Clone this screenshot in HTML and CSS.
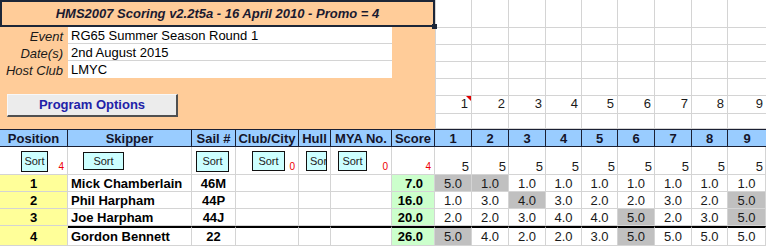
FILE: index.html
```html
<!DOCTYPE html>
<html>
<head>
<meta charset="utf-8">
<link rel="stylesheet" href="styles.css">
</head>
<body>
<div class="top">
  <div class="panel">
    <div class="title">HMS2007 Scoring v2.2t5a - 16 April 2010 - Promo = 4<span class="handle"></span></div>
    <div class="info">
      <div class="lbl">Event</div><div class="val">RG65 Summer Season Round 1</div>
      <div class="lbl">Date(s)</div><div class="val">2nd August 2015</div>
      <div class="lbl">Host Club</div><div class="val last">LMYC</div>
    </div>
    <div class="btnrow"><div class="progbtn">Program Options</div></div>
  </div>
  <div class="blank">
    <div class="g h0"></div><div class="g h0"></div><div class="g h0"></div><div class="g h0"></div><div class="g h0"></div><div class="g h0"></div><div class="g h0"></div><div class="g h0"></div><div class="g h0"></div>
    <div class="g"></div><div class="g"></div><div class="g"></div><div class="g"></div><div class="g"></div><div class="g"></div><div class="g"></div><div class="g"></div><div class="g"></div>
    <div class="g"></div><div class="g"></div><div class="g"></div><div class="g"></div><div class="g"></div><div class="g"></div><div class="g"></div><div class="g"></div><div class="g"></div>
    <div class="g"></div><div class="g"></div><div class="g"></div><div class="g"></div><div class="g"></div><div class="g"></div><div class="g"></div><div class="g"></div><div class="g"></div>
    <div class="g"></div><div class="g"></div><div class="g"></div><div class="g"></div><div class="g"></div><div class="g"></div><div class="g"></div><div class="g"></div><div class="g"></div>
    <div class="g num comment">1<span class="tri"></span></div><div class="g num">2</div><div class="g num">3</div><div class="g num">4</div><div class="g num">5</div><div class="g num">6</div><div class="g num">7</div><div class="g num">8</div><div class="g num">9</div>
    <div class="g"></div><div class="g"></div><div class="g"></div><div class="g"></div><div class="g"></div><div class="g"></div><div class="g"></div><div class="g"></div><div class="g"></div>
  </div>
</div>

<div class="table">
  <div class="hd">Position</div><div class="hd">Skipper</div><div class="hd">Sail #</div><div class="hd">Club/City</div><div class="hd">Hull</div><div class="hd">MYA No.</div><div class="hd">Score</div>
  <div class="hd">1</div><div class="hd">2</div><div class="hd">3</div><div class="hd">4</div><div class="hd">5</div><div class="hd">6</div><div class="hd">7</div><div class="hd">8</div><div class="hd">9</div>

  <div class="sc"><div class="sbtn b-pos">Sort</div><span class="rn">4</span></div>
  <div class="sc"><div class="sbtn b-skp">Sort</div></div>
  <div class="sc"><div class="sbtn b-sail">Sort</div></div>
  <div class="sc"><div class="sbtn b-club">Sort</div><span class="rn">0</span></div>
  <div class="sc"><div class="sbtn b-hull">Sor</div></div>
  <div class="sc"><div class="sbtn b-mya">Sort</div><span class="rn">0</span></div>
  <div class="sc"><span class="rn">4</span></div>
  <div class="sc cnt">5</div><div class="sc cnt">5</div><div class="sc cnt">5</div><div class="sc cnt">5</div><div class="sc cnt">5</div><div class="sc cnt">5</div><div class="sc cnt">5</div><div class="sc cnt">5</div><div class="sc cnt">5</div>

  <div class="c pos">1</div><div class="c skp">Mick Chamberlain</div><div class="c sail">46M</div><div class="c"></div><div class="c"></div><div class="c"></div><div class="c score">7.0</div>
  <div class="c r d">5.0</div><div class="c r d">1.0</div><div class="c r">1.0</div><div class="c r">1.0</div><div class="c r">1.0</div><div class="c r">1.0</div><div class="c r">1.0</div><div class="c r">1.0</div><div class="c r">1.0</div>

  <div class="c pos">2</div><div class="c skp">Phil Harpham</div><div class="c sail">44P</div><div class="c"></div><div class="c"></div><div class="c"></div><div class="c score">16.0</div>
  <div class="c r">1.0</div><div class="c r">3.0</div><div class="c r d">4.0</div><div class="c r">3.0</div><div class="c r">2.0</div><div class="c r">2.0</div><div class="c r">3.0</div><div class="c r">2.0</div><div class="c r d">5.0</div>

  <div class="c pos">3</div><div class="c skp">Joe Harpham</div><div class="c sail">44J</div><div class="c"></div><div class="c"></div><div class="c"></div><div class="c score">20.0</div>
  <div class="c r">2.0</div><div class="c r">2.0</div><div class="c r">3.0</div><div class="c r">4.0</div><div class="c r">4.0</div><div class="c r d">5.0</div><div class="c r">2.0</div><div class="c r">3.0</div><div class="c r d">5.0</div>

  <div class="c pos t0">4</div><div class="c skp t">Gordon Bennett</div><div class="c sail t">22</div><div class="c t"></div><div class="c t"></div><div class="c t"></div><div class="c score t">26.0</div>
  <div class="c r d t">5.0</div><div class="c r t">4.0</div><div class="c r t">2.0</div><div class="c r t">2.0</div><div class="c r t">3.0</div><div class="c r d t">5.0</div><div class="c r t">5.0</div><div class="c r t">5.0</div><div class="c r t">5.0</div>
</div>
</body>
</html>
```

FILE: styles.css
```css
* {
  box-sizing: border-box;
  margin: 0;
  padding: 0;
}

body {
  margin: 0;
  width: 766px;
  height: 246px;
  overflow: hidden;
  background: #fff;
  font-family: "Liberation Sans", Arial, sans-serif;
  font-size: 13px;
  color: #000;
}

/* ---------- top area ---------- */
.top {
  display: flex;
  height: 129px;
}

.panel {
  width: 435px;
  background: #ffcc99;
  display: flex;
  flex-direction: column;
}

.title {
  position: relative;
  height: 27px;
  border: 2px solid #1c2638;
  display: flex;
  align-items: center;
  justify-content: center;
  font-weight: bold;
  font-style: italic;
  color: #1a1a30;
}

.handle {
  position: absolute;
  right: -4px;
  bottom: -4px;
  width: 5px;
  height: 5px;
  background: #1c2638;
}

.info {
  display: grid;
  grid-template-columns: 68px 324px;
  grid-auto-rows: 17px;
}

.lbl {
  font-style: italic;
  text-align: right;
  padding: 2px 5px 0 0;
  line-height: 15px;
  color: #1a1a1a;
}

.val {
  background: #fff;
  border-bottom: 1px solid #d4d4d4;
  padding: 2px 0 0 3px;
  line-height: 14px;
}

.val.last {
  border-bottom: none;
}

.btnrow {
  padding: 16px 0 0 7px;
}

.progbtn {
  width: 171px;
  height: 23px;
  background: #ececec;
  border-top: 1px solid #f8f8f8;
  border-left: 1px solid #f8f8f8;
  border-right: 2px solid #505050;
  border-bottom: 2px solid #505050;
  display: flex;
  align-items: center;
  justify-content: center;
  font-weight: bold;
  color: #2222a8;
  padding-bottom: 1px;
}

.blank {
  width: 331px;
  border-left: 1px solid #d4d4d4;
  display: grid;
  grid-template-columns: 36px 37px 37px 36px 36px 37px 37px 36px 38px;
  grid-template-rows: 28px 17px 17px 17px 17px 18px 15px;
}

.g {
  border-right: 1px solid #d4d4d4;
  border-bottom: 1px solid #d4d4d4;
}

.g:nth-child(9n) {
  border-right: none;
}

.g.h0 {
  border-bottom: 1px solid #d4d4d4;
}

.num {
  position: relative;
  display: flex;
  align-items: flex-end;
  justify-content: flex-end;
  padding: 0 3px 2px 0;
  line-height: 14px;
  color: #1a1a1a;
}

.tri {
  position: absolute;
  top: 0;
  right: 0;
  width: 0;
  height: 0;
  border-top: 5px solid #e00000;
  border-left: 5px solid transparent;
}

/* ---------- table ---------- */
.table {
  display: grid;
  grid-template-columns: 68px 124px 44px 63px 32px 61px 43px 37px 37px 37px 36px 36px 37px 37px 36px 38px;
  grid-template-rows: 18px 28px 17px 17px 17px 20px;
}

.hd {
  background: #99ccff;
  border-top: 1px solid #1a1f33;
  border-bottom: 1px solid #1a1f33;
  border-right: 1px solid #1a1f33;
  font-weight: bold;
  color: #14142a;
  text-align: center;
  line-height: 15px;
  padding-top: 1px;
}

.hd:nth-child(16) {
  border-right: none;
}

.sc {
  display: grid;
  border-right: 1px solid #d4d4d4;
  border-bottom: 1px solid #d4d4d4;
}

.sc > * {
  grid-area: 1 / 1;
}

.sbtn {
  align-self: center;
  justify-self: start;
  background: #ccffff;
  border: 1px solid #111;
  font-size: 11px;
  color: #222;
  display: flex;
  align-items: center;
  justify-content: center;
  line-height: 12px;
  margin-top: 1px;
}

.b-pos { width: 27px; height: 21px; margin-left: 21px; }
.b-skp { width: 41px; height: 18px; margin-left: 15px; }
.b-sail { width: 33px; height: 21px; margin-left: 4px; }
.b-club { width: 33px; height: 20px; margin-left: 16px; }
.b-hull { width: 21px; height: 20px; margin-left: 7px; justify-content: flex-start; padding-left: 3px; overflow: hidden; }
.b-mya { width: 29px; height: 20px; margin-left: 7px; }

.rn {
  align-self: end;
  justify-self: end;
  font-size: 10px;
  line-height: 10px;
  color: #ee0000;
  padding: 0 3px 2px 0;
}

.cnt {
  display: flex;
  align-items: flex-end;
  justify-content: flex-end;
  padding: 0 2px 0 0;
  line-height: 14px;
  color: #1a1a1a;
}

.c {
  border-right: 1px solid #d4d4d4;
  border-bottom: 1px solid #d4d4d4;
  line-height: 14px;
  padding-top: 2px;
  white-space: nowrap;
  overflow: hidden;
}

.pos {
  background: #ffff99;
  font-weight: bold;
  text-align: center;
}

.skp {
  font-weight: bold;
  padding-left: 3px;
}

.sail {
  font-weight: bold;
  text-align: center;
}

.score {
  background: #ccffcc;
  font-weight: bold;
  text-align: right;
  padding-right: 11px;
}

.r {
  text-align: center;
  color: #1a1a1a;
}

.r.d {
  background: #c0c0c0;
}

.t {
  border-top: 2px solid #000;
}

.t0 {
  border-top: 2px solid #ffff99;
}
```
